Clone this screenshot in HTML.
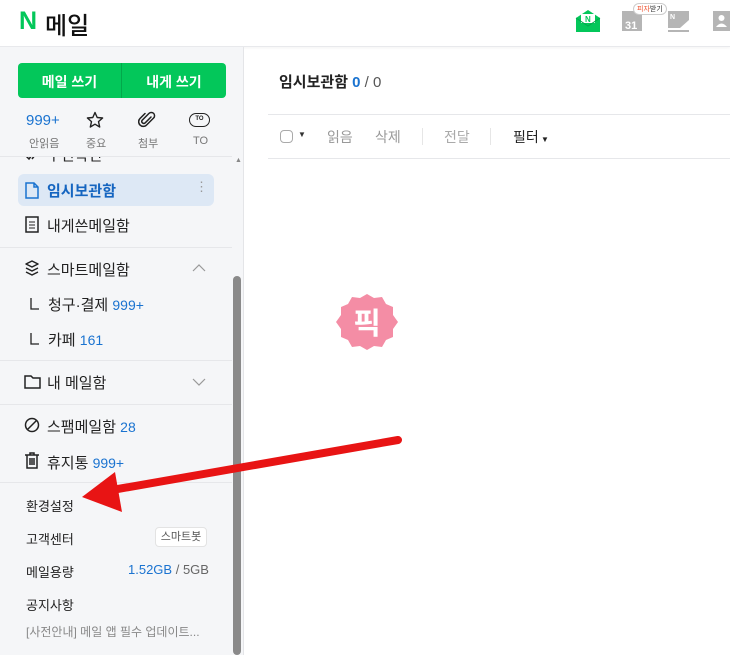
<!DOCTYPE html>
<html><head><meta charset="utf-8"><style>
*{margin:0;padding:0;box-sizing:border-box}
body{width:730px;height:655px;overflow:hidden;background:#fff;font-family:"Liberation Sans","Noto Sans CJK KR",sans-serif;color:#222;position:relative}
.hdr{position:absolute;left:0;top:0;width:730px;height:47px;background:#fff;border-bottom:1px solid #e8e9ec;box-shadow:0 1px 3px rgba(0,0,0,.05)}
.side{position:absolute;left:0;top:47px;width:232px;height:608px;background:#f5f6f8;overflow:hidden}
.track{position:absolute;left:232px;top:47px;width:12px;height:608px;background:#f5f6f8;border-right:1px solid #e4e5e8}
.thumb{position:absolute;left:233px;top:276px;width:8px;height:379px;background:#8a8a8a;border-radius:4px}
.abs{position:absolute;white-space:nowrap}
.blue{color:#1a73d0}
.sep{position:absolute;left:0;width:232px;height:1px;background:#e6e7ea}
.it{position:absolute;left:24px;font-size:15px}
.bot{position:absolute;left:26px;font-size:13px;color:#222}
</style></head><body>
<div class="hdr">
 <div class="abs" style="left:19px;top:7px;font-size:25px;font-weight:900;color:#03c75a">N</div>
 <div class="abs" style="left:45px;top:6px;font-size:24px;font-weight:500;color:#111">메일</div>
 <svg class="abs" style="left:575px;top:9px" width="26" height="24"><path d="M1 9 L13 1 L25 9 V23 H1Z" fill="#03c75a"/><rect x="6" y="5" width="14" height="9" fill="#fff"/><text x="10" y="13" font-size="8" font-weight="bold" fill="#03c75a" font-family="Liberation Sans">N</text><path d="M1 9 L13 17 L25 9" fill="none" stroke="#02a84b"/></svg>
 <svg class="abs" style="left:622px;top:11px" width="22" height="22"><rect x="0" y="0" width="20" height="20" fill="#b5b5b5"/><text x="3" y="18" font-size="11" font-weight="bold" fill="#fff" font-family="Liberation Sans">31</text></svg>
 <div class="abs" style="left:633px;top:3px;font-size:7px;background:#fff;border:1px solid #ccc;border-radius:6px;padding:0 3px;color:#333"><span style="color:#e53">피자</span>받기</div>
 <svg class="abs" style="left:668px;top:11px" width="22" height="22"><rect width="21" height="17" fill="#b5b5b5"/><text x="2" y="8" font-size="7" font-weight="bold" fill="#fff">N</text><path d="M12 17 L21 9 V17Z" fill="#fff"/><rect y="19" width="21" height="2" fill="#b5b5b5"/></svg>
 <svg class="abs" style="left:713px;top:11px" width="17" height="20"><rect width="17" height="20" fill="#b5b5b5"/><circle cx="8.5" cy="7" r="3" fill="#fff"/><path d="M3 16 Q8.5 9 14 16Z" fill="#fff"/></svg>
</div>
<div class="side">
 <div class="it" style="left:47px;top:97px">수신확인</div>
 <svg class="abs" style="left:24px;top:102px" width="16" height="12"><path d="M1 6 L5 10 L11 2 M8 10 L14 2" fill="none" stroke="#222" stroke-width="1.5"/></svg>
 <div class="abs" style="left:0;top:0;width:232px;height:109px;background:#f5f6f8"></div>
 <div class="abs" style="left:18px;top:16px;width:208px;height:35px;background:#03c75a;border-radius:4px"></div>
 <div class="abs" style="left:121px;top:16px;width:1px;height:35px;background:#02a84b"></div>
 <div class="abs" style="left:18px;top:25px;width:103px;text-align:center;color:#fff;font-size:14px;font-weight:600">메일 쓰기</div>
 <div class="abs" style="left:122px;top:25px;width:104px;text-align:center;color:#fff;font-size:14px;font-weight:600">내게 쓰기</div>
 <div class="abs blue" style="left:26px;top:65px;font-size:15px">999+</div>
 <div class="abs" style="left:29px;top:88px;font-size:11px;color:#777">안읽음</div>
 <svg class="abs" style="left:86px;top:64px" width="18" height="18"><path d="M9 1.5 L11.2 6.5 L16.6 7 L12.5 10.6 L13.7 16 L9 13.2 L4.3 16 L5.5 10.6 L1.4 7 L6.8 6.5Z" fill="none" stroke="#222" stroke-width="1.4" stroke-linejoin="round"/></svg>
 <div class="abs" style="left:86px;top:88px;font-size:11px;color:#777">중요</div>
 <svg class="abs" style="left:138px;top:64px" width="18" height="18"><path d="M13 6 L7 12 A2 2 0 0 1 4.2 9.2 L11 2.4 A3.2 3.2 0 0 1 15.6 7 L8.6 14 A4.6 4.6 0 0 1 2 7.5 L7 2.5" fill="none" stroke="#222" stroke-width="1.5" stroke-linecap="round"/></svg>
 <div class="abs" style="left:138px;top:88px;font-size:11px;color:#777">첨부</div>
 <div class="abs" style="left:189px;top:66px;width:21px;height:14px;border:1.5px solid #222;border-radius:7px;font-size:6px;font-weight:bold;text-align:center;line-height:11px">TO</div>
 <div class="abs" style="left:193px;top:88px;font-size:11px;color:#777">TO</div>
 <div class="sep" style="top:109px"></div>
 <div class="abs" style="left:18px;top:127px;width:196px;height:32px;background:#dde8f5;border-radius:6px"></div>
 <svg class="abs" style="left:25px;top:135px" width="14" height="17"><path d="M1 1 H9 L13 5 V16 H1Z M9 1 V5 H13" fill="none" stroke="#1a73d0" stroke-width="1.5"/></svg>
 <div class="abs blue" style="left:47px;top:133px;font-size:15px;font-weight:700;color:#1565c0">임시보관함</div>
 <div class="abs" style="left:195px;top:132px;color:#999;font-size:13px">⋮</div>
 <svg class="abs" style="left:25px;top:169px" width="14" height="17"><rect x="1" y="1" width="12" height="15" fill="none" stroke="#222" stroke-width="1.5"/><path d="M4 6H10M4 9H10M4 12H10" stroke="#222"/></svg>
 <div class="it" style="left:47px;top:168px">내게쓴메일함</div>
 <div class="sep" style="top:200px"></div>
 <svg class="abs" style="left:24px;top:213px" width="16" height="16"><path d="M8 1 L14 4 L8 7 L2 4Z M2 8 L8 11 L14 8 M2 12 L8 15 L14 12" fill="none" stroke="#222" stroke-width="1.5" stroke-linejoin="round"/></svg>
 <div class="it" style="left:47px;top:212px">스마트메일함</div>
 <svg class="abs" style="left:192px;top:217px" width="14" height="8"><path d="M1 7 L7 1 L13 7" fill="none" stroke="#999" stroke-width="1.2"/></svg>
 <svg class="abs" style="left:30px;top:251px" width="10" height="12"><path d="M1 0 V11 H9" fill="none" stroke="#222" stroke-width="1.3"/></svg>
 <div class="it" style="left:48px;top:247px">청구·결제 <span class="blue" style="font-size:14px">999+</span></div>
 <svg class="abs" style="left:30px;top:286px" width="10" height="12"><path d="M1 0 V11 H9" fill="none" stroke="#222" stroke-width="1.3"/></svg>
 <div class="it" style="left:48px;top:282px">카페 <span class="blue" style="font-size:14px">161</span></div>
 <div class="sep" style="top:313px"></div>
 <svg class="abs" style="left:24px;top:328px" width="17" height="14"><path d="M1 1 H7 L9 3 H16 V13 H1Z" fill="none" stroke="#222" stroke-width="1.5"/></svg>
 <div class="it" style="left:47px;top:325px">내 메일함</div>
 <svg class="abs" style="left:192px;top:331px" width="14" height="8"><path d="M1 1 L7 7 L13 1" fill="none" stroke="#999" stroke-width="1.2"/></svg>
 <div class="sep" style="top:357px"></div>
 <svg class="abs" style="left:24px;top:370px" width="16" height="16"><circle cx="8" cy="8" r="6.5" fill="none" stroke="#222" stroke-width="1.5"/><path d="M3.5 12.5 L12.5 3.5" stroke="#222" stroke-width="1.5"/></svg>
 <div class="it" style="left:47px;top:369px">스팸메일함 <span class="blue" style="font-size:14px">28</span></div>
 <svg class="abs" style="left:25px;top:405px" width="14" height="17"><path d="M0 3H14M5 3V1H9V3M2 3V16H12V3M5 6V13M7 6V13M9 6V13" fill="none" stroke="#222" stroke-width="1.5"/></svg>
 <div class="it" style="left:47px;top:405px">휴지통 <span class="blue" style="font-size:14px">999+</span></div>
 <div class="sep" style="top:435px"></div>
 <div class="bot" style="top:449px">환경설정</div>
 <div class="bot" style="top:482px">고객센터</div>
 <div class="abs" style="left:155px;top:480px;width:52px;height:20px;border:1px solid #e3e3e3;background:#fff;border-radius:4px;font-size:11px;color:#555;text-align:center;line-height:18px">스마트봇</div>
 <div class="bot" style="top:515px">메일용량</div>
 <div class="abs" style="left:128px;top:515px;font-size:13px"><span class="blue">1.52GB</span> <span style="color:#666">/ 5GB</span></div>
 <div class="bot" style="top:548px">공지사항</div>
 <div class="abs" style="left:26px;top:576px;font-size:12px;color:#888">[사전안내] 메일 앱 필수 업데이트...</div>
</div>
<div class="track"></div><div class="thumb"></div>
<div class="abs" style="left:235px;top:157px;font-size:7px;color:#888">▲</div>
<div class="abs" style="left:279px;top:71px;font-size:15px;font-weight:700">임시보관함 <span class="blue">0</span><span style="font-weight:400;color:#555"> / 0</span></div>
<div class="abs" style="left:268px;top:114px;width:462px;height:1px;background:#e6e7ea"></div>
<div class="abs" style="left:268px;top:158px;width:462px;height:1px;background:#e6e7ea"></div>
<div class="abs" style="left:280px;top:130px;width:13px;height:13px;border:1px solid #aaa;border-radius:4px"></div>
<div class="abs" style="left:298px;top:130px;font-size:8px;color:#333">▼</div>
<div class="abs" style="left:327px;top:127px;font-size:14px;color:#999">읽음</div>
<div class="abs" style="left:375px;top:127px;font-size:14px;color:#999">삭제</div>
<div class="abs" style="left:422px;top:128px;width:1px;height:17px;background:#e6e6e6"></div>
<div class="abs" style="left:444px;top:127px;font-size:14px;color:#aaa">전달</div>
<div class="abs" style="left:490px;top:128px;width:1px;height:17px;background:#e6e6e6"></div>
<div class="abs" style="left:513px;top:127px;font-size:14px;color:#222">필터<span style="font-size:8px"> ▼</span></div>
<svg class="abs" style="left:334px;top:293px" width="66" height="58" viewBox="0 0 66 58"><polygon points="33,1 40,5 48,4 52,11 59,14 59,22 64,29 59,36 59,44 52,47 48,54 40,53 33,57 26,53 18,54 14,47 7,44 7,36 2,29 7,22 7,14 14,11 18,4 26,5" fill="#f48da5"/><text x="33" y="41" text-anchor="middle" font-size="30" font-weight="bold" fill="#fff" font-family="Noto Sans CJK KR,sans-serif">픽</text></svg>
<svg class="abs" style="left:0;top:0" width="730" height="655"><line x1="398" y1="440" x2="112" y2="490" stroke="#e81414" stroke-width="8" stroke-linecap="round"/><polygon points="82,497 115,472 122,512" fill="#e81414"/></svg>
</body></html>
